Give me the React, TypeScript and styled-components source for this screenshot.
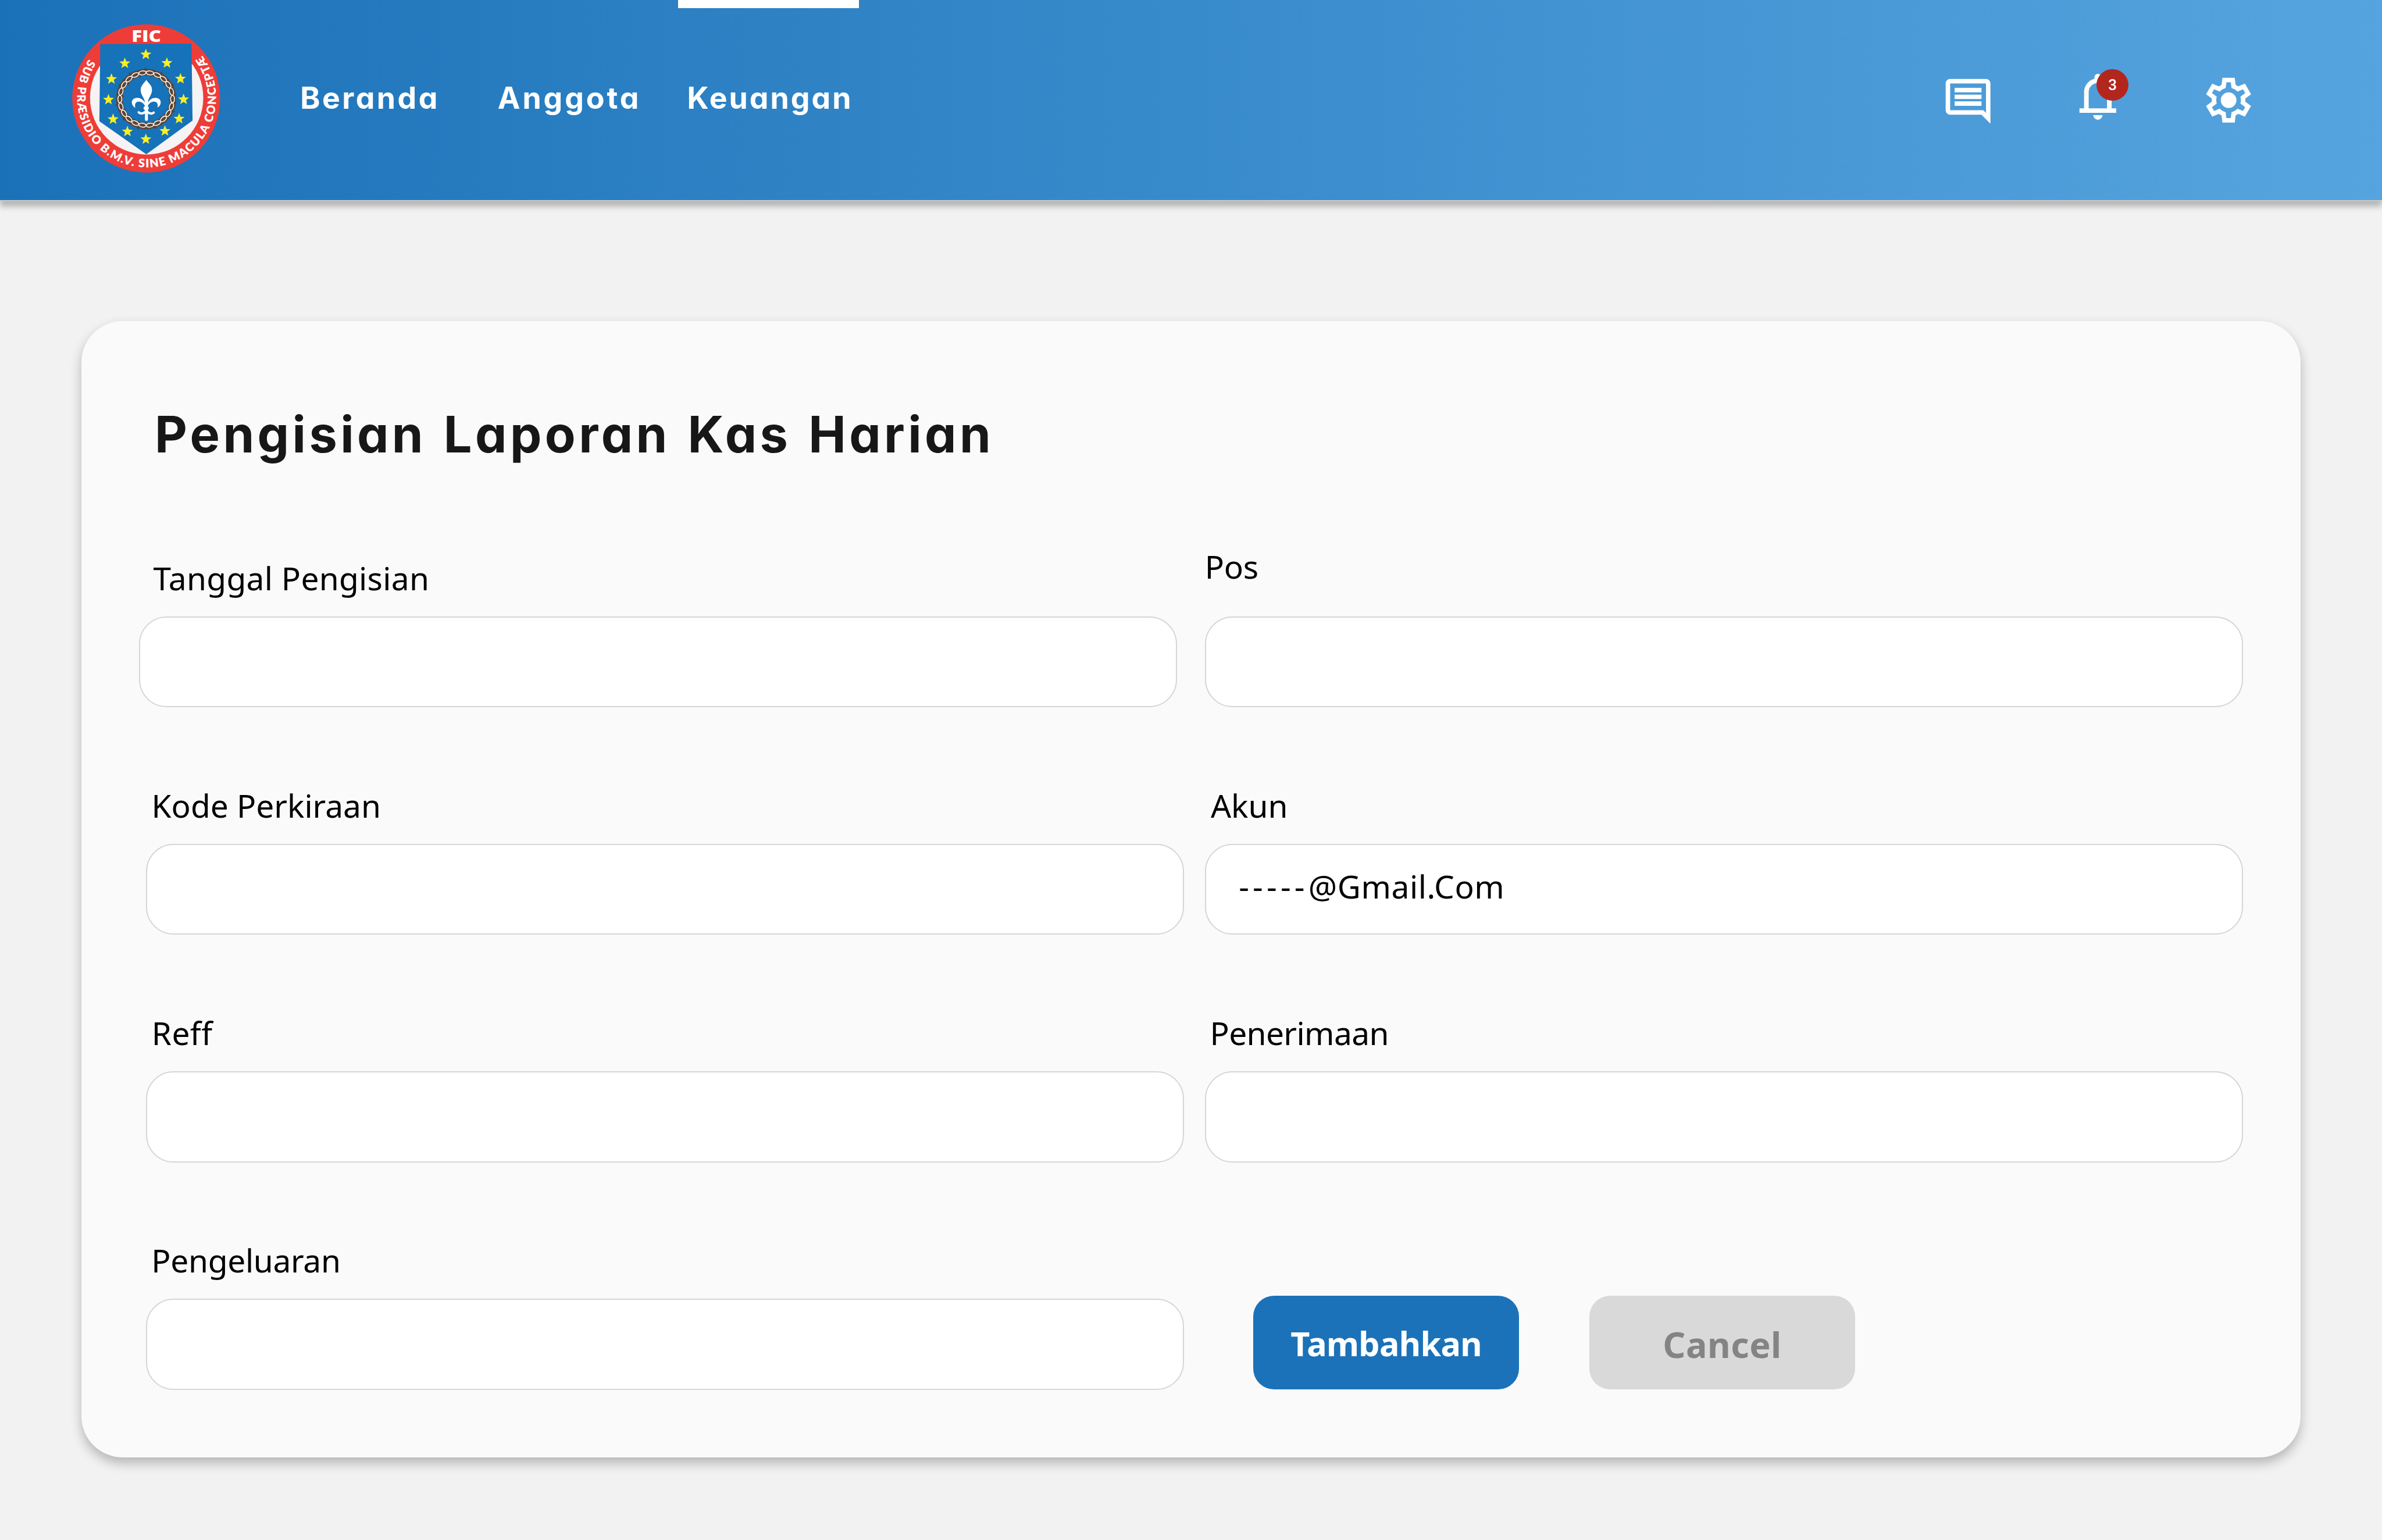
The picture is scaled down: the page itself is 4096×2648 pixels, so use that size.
import React from "react";
import styled, { createGlobalStyle } from "styled-components";

const GlobalStyle = createGlobalStyle`
  *, *::before, *::after { box-sizing: border-box; }
  html, body { margin: 0; padding: 0; background: #f2f2f2; }
  body { overflow: hidden; }
`;

const headingFont = `Inter, "Open Sans", sans-serif`;
const bodyFont = `"Noto Sans", "Open Sans", sans-serif`;

const Page = styled.div`
  display: flex;
  flex-direction: column;
  width: 4096px;
  height: 2648px;
  background: #f2f2f2;
  font-family: ${bodyFont};
`;

const Header = styled.header`
  display: flex;
  align-items: flex-start;
  flex: none;
  height: 346px;
  padding: 0 218px 0 124.4px;
  border-bottom: 2.4px solid #c8c8c8;
  background: linear-gradient(90deg, #1b71b8 0%, #388bcb 50%, #56a4df 100%);
  background-clip: padding-box;
  box-shadow: 0 9.5px 9.5px rgba(0, 0, 0, 0.25);
`;

const LogoSvg = styled.svg`
  flex: none;
  display: block;
  width: 254.6px;
  height: 254.6px;
  margin: 42.2px 137.2px 0 0;
`;

const Nav = styled.nav`
  display: flex;
  flex: 1;
`;

const NavItem = styled.a<{ $width: number; $spacing: number }>`
  position: relative;
  width: ${(p) => p.$width}px;
  height: 337.5px;
  line-height: 337.5px;
  font-family: ${headingFont};
  font-feature-settings: "cv11";
  font-size: 51.8px;
  font-weight: 650;
  letter-spacing: ${(p) => p.$spacing}px;
  color: #ffffff;
  white-space: nowrap;
`;

const ActiveMark = styled.span`
  position: absolute;
  top: 0;
  left: -15.5px;
  width: 310.5px;
  height: 14.2px;
  background: #ffffff;
`;

const Actions = styled.div`
  display: flex;
  align-items: flex-start;
  gap: 130.4px;
`;

const ActionButton = styled.span<{ $size: number; $top: number }>`
  position: relative;
  display: block;
  width: ${(p) => p.$size}px;
  height: ${(p) => p.$size}px;
  margin-top: ${(p) => p.$top}px;

  svg {
    display: block;
    width: 100%;
    height: 100%;
    fill: #ffffff;
  }
`;

const Badge = styled.span`
  position: absolute;
  top: 0;
  left: 45px;
  display: flex;
  align-items: center;
  justify-content: center;
  width: 54.5px;
  height: 54.5px;
  border-radius: 50%;
  background: #b3261e;
  color: #ffffff;
  font: 500 26px/26px Roboto, sans-serif;
`;

const Card = styled.main`
  width: 3816.3px;
  height: 1953.2px;
  margin: 206.4px 0 0 139.9px;
  padding: 134.8px 0 0 111.4px;
  border-radius: 71px;
  background: #fafafa;
  box-shadow: 0 9.5px 19px rgba(0, 0, 0, 0.25);
`;

const Title = styled.h1`
  margin: 0 0 146.4px 14.6px;
  font-family: ${headingFont};
  font-feature-settings: "cv11";
  font-size: 86.4px;
  line-height: 120px;
  font-weight: 650;
  letter-spacing: 5.4px;
  word-spacing: 4px;
  color: #171717;
  white-space: nowrap;
`;

const Form = styled.form`
  display: grid;
  grid-template-columns: 1784.9px 1784.9px;
  grid-template-rows: repeat(4, 262.8px);
  column-gap: 35.5px;
  row-gap: 128.3px;
`;

const Field = styled.label<{ $shift: number }>`
  display: flex;
  flex-direction: column;
  justify-content: flex-end;
  width: 1784.9px;
  margin-left: ${(p) => p.$shift}px;
`;

const FieldLabel = styled.span<{ $indent: number; $gap: number; $spacing: number }>`
  flex: none;
  margin: 0 0 ${(p) => p.$gap}px ${(p) => p.$indent}px;
  font-size: 55px;
  line-height: 80px;
  letter-spacing: ${(p) => p.$spacing}px;
  color: #000000;
  white-space: nowrap;
`;

const InputBox = styled.div`
  display: flex;
  align-items: center;
  flex: none;
  width: 100%;
  height: 156.4px;
  padding: 0 56px 10.8px 56.5px;
  border: 2.4px solid #d6d6d6;
  border-radius: 47.4px;
  background: #ffffff;
  color: #000000;
  font-size: 55px;
  line-height: 80px;
  letter-spacing: 0.6px;
  white-space: nowrap;
`;

const Mask = styled.span`
  letter-spacing: 6.2px;
`;

const Buttons = styled.div`
  display: flex;
  align-items: flex-end;
  gap: 120.8px;
  padding: 0 0 1px 83.3px;
`;

const Button = styled.button<{ $muted?: boolean }>`
  width: 457.2px;
  height: 160.2px;
  padding: ${(p) => (p.$muted ? 5.8 : 3.4)}px 0 0;
  border: 0;
  border-radius: 35.6px;
  background: ${(p) => (p.$muted ? "#d9d9d9" : "#1b72b8")};
  color: ${(p) => (p.$muted ? "#848484" : "#ffffff")};
  font-family: ${bodyFont};
  font-size: ${(p) => (p.$muted ? 61 : 57.4)}px;
  font-weight: 700;
  letter-spacing: ${(p) => (p.$muted ? 0.5 : -0.6)}px;
`;

const STARS: [number, number][] = [
  [731, 355], [548, 432], [914, 429], [432, 568], [1032, 565], [406, 747],
  [1059, 744], [446, 916], [1020, 912], [571, 1023], [897, 1018], [731, 1090],
];

function starPoints(cx: number, cy: number) {
  return Array.from({ length: 10 }, (_, i) => {
    const r = i % 2 ? 21.5 : 50;
    const a = (Math.PI / 5) * i - Math.PI / 2;
    return `${(cx + r * Math.cos(a)).toFixed(1)},${(cy + r * Math.sin(a)).toFixed(1)}`;
  }).join(" ");
}

const THORNS: [number, number][] = [
  [-92, 1], [-60, 1], [-28, 1], [2, -1], [24, 1], [52, -1], [72, 1], [105, 1], [137, 1],
  [168, 1], [208, 1], [237, 1], [186, -1], [220, -1], [255, -1], [282, -1], [322, -1],
];

function Emblem() {
  return (
    <LogoSvg viewBox="90 94 1287 1284" preserveAspectRatio="none" role="img">
      <defs>
        <path id="motto" d="M236 394 A604 604 0 1 0 1229 378" />
        <clipPath id="lower">
          <rect x="200" y="300" width="1100" height="960" />
        </clipPath>
      </defs>
      <circle cx="733.5" cy="736" r="642.5" fill="#ee3d38" />
      <circle cx="738" cy="730" r="492" fill="#f6f3f4" clipPath="url(#lower)" />
      <path d="M335 264 L1128 260 L1137 928 L735 1220 L327 934 Z" fill="#1672b9" />
      {STARS.map(([x, y]) => (
        <polygon key={`${x}-${y}`} points={starPoints(x, y)} fill="#faee24" />
      ))}
      <g transform="translate(734 741)">
        <circle r="233" fill="none" stroke="#5b4433" strokeWidth="55" />
        {THORNS.map(([angle, side]) => (
          <path
            key={angle}
            d={side > 0 ? "M252 -14 L277 2 L252 14 Z" : "M212 -14 L190 -2 L212 14 Z"}
            transform={`rotate(${angle})`}
            fill="#5b4433"
          />
        ))}
        {Array.from({ length: 22 }, (_, i) => (
          <ellipse
            key={i}
            cx="0"
            cy="-229"
            rx="32"
            ry="17"
            fill="none"
            stroke="#fbf3ee"
            strokeWidth="8"
            transform={`rotate(${(i + 0.5) * (360 / 22)})`}
          />
        ))}
      </g>
      <g transform="translate(420 420)" fill="#ffffff">
        <path d="M315 155 C322 168 332 177 342 189 C356 206 366 220 364 248 C361 290 329 316 329 350 L329 380 L302 380 L302 350 C302 316 268 290 266 248 C264 220 276 206 288 189 C298 177 308 168 315 155 Z" />
        <path d="M304 354 C288 326 262 310 235 311 C205 312 188 330 189 352 C190 372 203 388 219 398 C214 370 218 344 248 343 C272 343 288 355 304 380 Z" />
        <path d="M327 354 C343 326 369 310 396 311 C426 312 441 330 440 352 C439 372 428 386 412 394 C417 368 413 344 383 343 C359 343 343 355 327 380 Z" />
        <ellipse cx="314" cy="400" rx="23" ry="17" />
        <rect x="303" y="370" width="26" height="140" rx="13" />
        <path d="M249 436 C262 454 296 444 305 432 M379 438 C366 454 334 444 325 432" fill="none" stroke="#ffffff" strokeWidth="20" strokeLinecap="round" />
      </g>
      <text
        x="607"
        y="245"
        fontFamily='"Open Sans", sans-serif'
        fontSize="144"
        fontWeight="800"
        fill="#ffffff"
        textLength="257"
        lengthAdjust="spacingAndGlyphs"
      >
        FIC
      </text>
      <text fontFamily="Lato, sans-serif" fontSize="101" fontWeight="800" fill="#ffffff" textLength="2646">
        <textPath href="#motto" textLength="2646">
          SUB PRÆSIDIO B.M.V. SINE MACULA CONCEPTÆ
        </textPath>
      </text>
    </LogoSvg>
  );
}

const CommentIcon = () => (
  <svg viewBox="0 0 24 24">
    <path d="M21.99 4c0-1.1-.89-2-1.99-2H4c-1.1 0-2 .9-2 2v12c0 1.1.9 2 2 2h14l4 4-.01-18zM20 4v13.17L18.83 16H4V4h16zM6 12h12v2H6v-2zm0-3h12v2H6V9zm0-3h12v2H6V6z" />
  </svg>
);

const BellIcon = () => (
  <svg viewBox="0 -960 960 960">
    <path d="M160-200v-80h80v-280q0-83 50-147.5T420-792v-28q0-25 17.5-42.5T480-880q25 0 42.5 17.5T540-820v28q80 20 130 84.5T720-560v280h80v80H160ZM480-80q-33 0-56.5-23.5T400-160h160q0 33-23.5 56.5T480-80ZM320-280h320v-280q0-66-47-113t-113-47q-66 0-113 47t-47 113v280Z" />
  </svg>
);

const GearIcon = () => (
  <svg viewBox="0 -960 960 960">
    <path d="m370-80-16-128q-13-5-24.5-12T307-235l-119 50L78-375l103-78q-1-7-1-13.5v-27q0-6.5 1-13.5L78-585l110-190 119 50q11-8 23-15t24-12l16-128h220l16 128q13 5 24.5 12t22.5 15l119-50 110 190-103 78q1 7 1 13.5v27q0 6.5-2 13.5l103 78-110 190-118-50q-11 8-23 15t-24 12L590-80H370Zm70-80h79l14-106q31-8 57.5-23.5T639-327l99 41 39-68-86-65q5-14 7-29.5t2-31.5q0-16-2-31.5t-7-29.5l86-65-39-68-99 42q-22-23-48.5-38.5T533-694l-13-106h-79l-14 106q-31 8-57.5 23.5T321-633l-99-41-39 68 86 64q-5 15-7 30t-2 32q0 16 2 31t7 30l-86 65 39 68 99-42q22 23 48.5 38.5T427-266l13 106Z" />
    <circle cx="480" cy="-480" r="140" />
  </svg>
);

type FieldSpec = {
  label: string;
  indent: number;
  shift?: number;
  gap?: number;
  spacing?: number;
  mask?: string;
  value?: string;
};

const FIELDS: FieldSpec[] = [
  { label: "Tanggal Pengisian", indent: 24, shift: -11.9, spacing: 0.3 },
  { label: "Pos", indent: 0, gap: 46, spacing: -0.2 },
  { label: "Kode Perkiraan", indent: 9.3 },
  { label: "Akun", indent: 10.3, mask: "-----", value: "@Gmail.Com" },
  { label: "Reff", indent: 9.5, spacing: 0.4 },
  { label: "Penerimaan", indent: 8.8, spacing: -0.6 },
  { label: "Pengeluaran", indent: 9, spacing: -0.3 },
];

export default function App() {
  return (
    <Page>
      <GlobalStyle />
      <Header>
        <Emblem />
        <Nav>
          <NavItem $width={339.7} $spacing={3.5}>Beranda</NavItem>
          <NavItem $width={325.7} $spacing={3.9}>Anggota</NavItem>
          <NavItem $width={310} $spacing={3}>
            <ActiveMark />
            Keuangan
          </NavItem>
        </Nav>
        <Actions>
          <ActionButton $size={92.4} $top={128}>
            <CommentIcon />
          </ActionButton>
          <ActionButton $size={94.8} $top={118.5}>
            <BellIcon />
            <Badge>3</Badge>
          </ActionButton>
          <ActionButton $size={92.4} $top={125.6}>
            <GearIcon />
          </ActionButton>
        </Actions>
      </Header>
      <Card>
        <Title>Pengisian Laporan Kas Harian</Title>
        <Form>
          {FIELDS.map((f) => (
            <Field key={f.label} $shift={f.shift ?? 0}>
              <FieldLabel $indent={f.indent} $gap={f.gap ?? 26.3} $spacing={f.spacing ?? 0}>
                {f.label}
              </FieldLabel>
              <InputBox>
                {f.mask && <Mask>{f.mask}</Mask>}
                {f.value}
              </InputBox>
            </Field>
          ))}
          <Buttons>
            <Button type="button">Tambahkan</Button>
            <Button type="button" $muted>
              Cancel
            </Button>
          </Buttons>
        </Form>
      </Card>
    </Page>
  );
}
